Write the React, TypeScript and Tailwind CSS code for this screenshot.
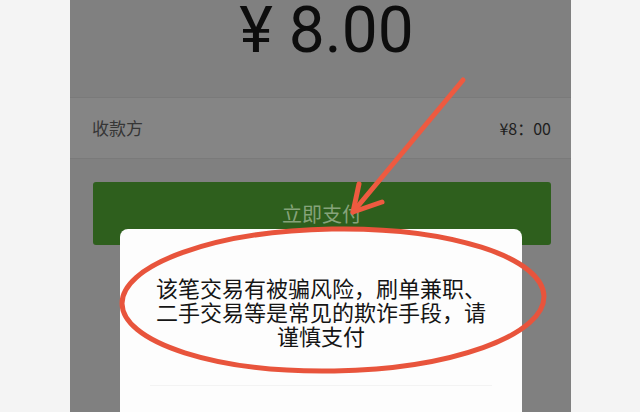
import React from "react";

const cjk = { fontFamily: '"Noto Sans CJK SC", "Noto Sans", sans-serif' };

function Annotation() {
  return (
    <svg
      className="pointer-events-none absolute left-0 top-0"
      width={640}
      height={412}
      viewBox="0 0 640 412"
      fill="none"
    >
      <ellipse
        cx={333}
        cy={300}
        rx={211}
        ry={71}
        stroke="#e8543c"
        strokeWidth={5}
        transform="rotate(-1 333 300)"
      />
      <g stroke="#ee5a40" strokeWidth={5} strokeLinecap="round" strokeLinejoin="round">
        <path d="M463 80 L353 212" />
        <path d="M359 184 L353 212 L382 202" />
      </g>
    </svg>
  );
}

export default function App() {
  return (
    <div className="relative h-[412px] w-[640px] overflow-hidden bg-[#f4f4f4]" style={cjk}>
      <main className="ml-[70px] h-full w-[501px] bg-[#808080]">
        <div className="flex h-[97px] items-start justify-center pl-[12px]">
          <p
            className="mt-[-4px] text-[64px] leading-[70px] text-[#0d0d0d]"
            style={{ fontFamily: "Roboto, sans-serif" }}
          >
            ¥ 8.00
          </p>
        </div>

        <div className="flex h-[62px] items-center justify-between border-y border-[#7a7a7a] bg-[#858585] pl-[22px] pr-[20px]">
          <span className="text-[17px] text-[#363636]">收款方</span>
          <span className="text-[16px] text-[#1e1e1e]">¥8：00</span>
        </div>

        <div className="ml-[23px] mr-[20px] mt-[23px] flex h-[63px] items-center justify-center rounded-[3px] bg-[#2e5f1d]">
          <span className="text-[20px] text-[#86a37a]">立即支付</span>
        </div>
      </main>

      <section className="absolute left-[120px] top-[229px] h-[200px] w-[402px] rounded-[8px] bg-[#fdfdfd] px-[30px] pt-[46px]">
        <p className="text-center text-[22px] leading-[24px] text-[#151515]">
          该笔交易有被骗风险，刷单兼职、
          <br />
          二手交易等是常见的欺诈手段，请
          <br />
          谨慎支付
        </p>
        <div className="mt-[38px] border-t border-[#f3f3f3]" />
      </section>

      <Annotation />
    </div>
  );
}
